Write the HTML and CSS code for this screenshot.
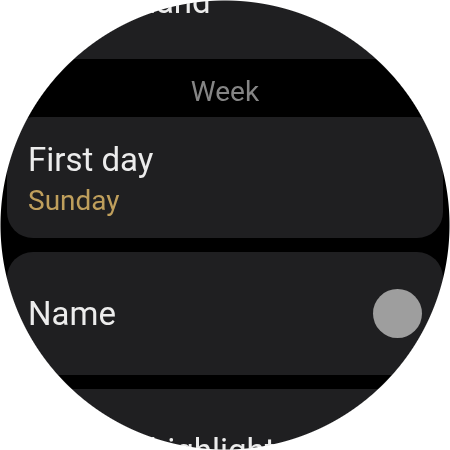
FILE: index.html
```html
<!DOCTYPE html>
<html lang="en">
<head>
  <meta charset="UTF-8" />
  <meta name="viewport" content="width=device-width, initial-scale=1.0"/>
  <title>Watch face settings</title>
  <link rel="stylesheet" href="styles.css">
</head>
<body>
  <div class="screen">
    <div class="list">
      <div class="card row top">
        <span class="title">Minute hand</span>
        <span class="toggle"></span>
      </div>

      <div class="section">Week</div>

      <div class="card">
        <span class="title">First day</span>
        <span class="value">Sunday</span>
      </div>

      <div class="card row">
        <span class="title">Name</span>
        <span class="toggle"></span>
      </div>

      <div class="card row">
        <span class="title">Outside highlight</span>
        <span class="toggle"></span>
      </div>
    </div>
  </div>
</body>
</html>
```

FILE: styles.css
```css
body {
  margin: 0;
  background-color: #fff;
  font-family: Roboto, "Noto Sans", sans-serif;
}

.screen {
  position: relative;
  isolation: isolate;
  width: 450px;
  height: 450px;
  overflow: hidden;
  background-color: #000;
}

/* round display mask */
.screen::after {
  content: "";
  position: absolute;
  inset: 0;
  z-index: 1;
  pointer-events: none;
  background: radial-gradient(circle closest-side at 50% 50%, transparent calc(100% - 1px), #fff 100%);
}

.list {
  display: flex;
  flex-direction: column;
  gap: 14px;
  margin-top: -64px;
  padding: 0 7px;
}

.card {
  display: flex;
  flex-direction: column;
  padding: 23px 21px 20px;
  background-color: #1f1f21;
  border-radius: 26px;
}

.card.row {
  flex-direction: row;
  align-items: center;
  justify-content: space-between;
  min-height: 123px;
  padding-top: 0;
  padding-bottom: 0;
  box-sizing: border-box;
}

/* row scrolled half off the top */
.card.row.top {
  padding-top: 8px;
}

/* labels stay above the mask but fade into the white corners */
.title,
.value,
.section {
  position: relative;
  z-index: 2;
  mix-blend-mode: lighten;
}

.title {
  font-size: 33px;
  line-height: 40px;
  color: #ececec;
  white-space: nowrap;
}

.value {
  margin-top: 4px;
  font-size: 28px;
  line-height: 34px;
  color: #bf9f5c;
}

.toggle {
  width: 49px;
  height: 49px;
  border-radius: 50%;
  background-color: #9e9e9e;
  flex-shrink: 0;
}

.section {
  height: 50px;
  padding-top: 8px;
  margin: -14px 0;
  font-size: 28px;
  line-height: 50px;
  text-align: center;
  color: #858585;
}
```
